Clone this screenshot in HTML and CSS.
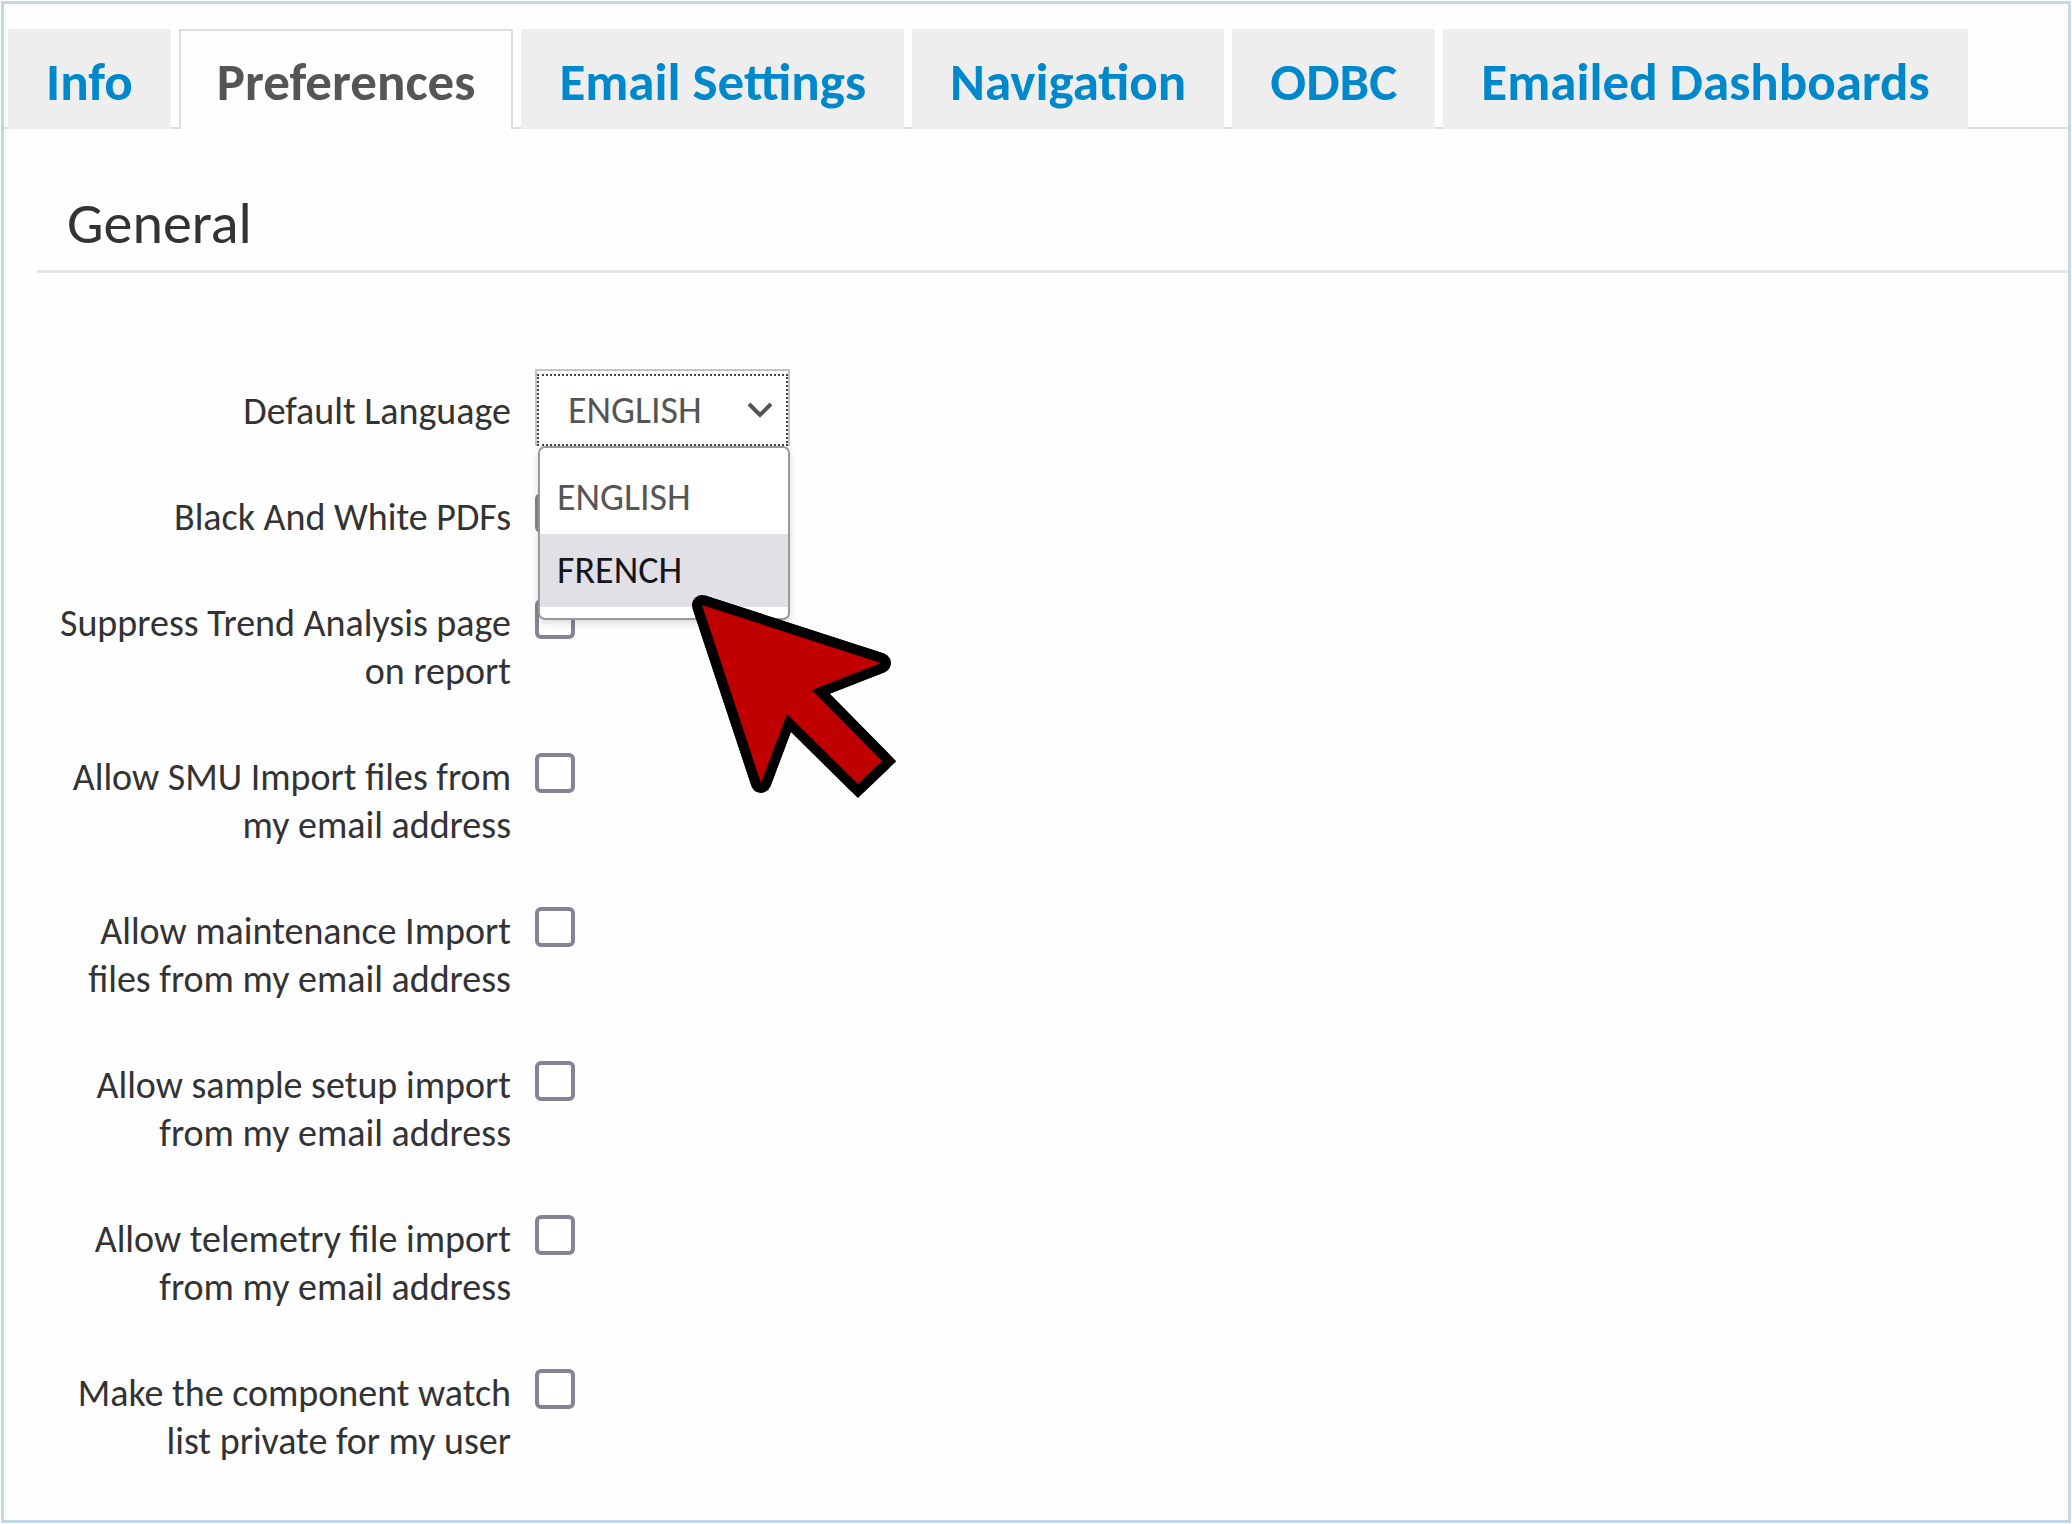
FILE: index.html
```html
<!DOCTYPE html>
<html lang="en">
<head>
  <meta charset="UTF-8">
  <meta name="viewport" content="width=device-width, initial-scale=1.0">
  <title>User Preferences</title>
  <link rel="stylesheet" href="styles.css">
</head>
<body>
  <div class="frame">
    <nav class="tabs">
      <a href="#info">Info</a>
      <a href="#preferences" class="active">Preferences</a>
      <a href="#email">Email Settings</a>
      <a href="#navigation">Navigation</a>
      <a href="#odbc">ODBC</a>
      <a href="#dashboards">Emailed Dashboards</a>
    </nav>

    <main>
      <h2>General</h2>

      <form>
        <div class="row">
          <label for="language">Default Language</label>
          <div class="dropdown">
            <select id="language">
              <option selected>ENGLISH</option>
              <option>FRENCH</option>
            </select>
            <svg class="chevron" viewBox="0 0 28 18" aria-hidden="true">
              <path d="M3 3 L14 14 L25 3"/>
            </svg>
            <ul class="menu">
              <li>ENGLISH</li>
              <li class="hover">FRENCH</li>
            </ul>
            <svg class="cursor" viewBox="0 0 210 212" aria-hidden="true">
              <!-- the round joins soften the three tips, the mitred ones keep the tail square -->
              <path stroke-linejoin="round" d="M12 15 L191 73 L122 100 L192 171 L168 194 L97 124 L71 193 Z"/>
              <path stroke-miterlimit="2" d="M12 15 L191 73 L122 100 L192 171 L168 194 L97 124 L71 193 Z"/>
            </svg>
          </div>
        </div>
        <div class="row">
          <label for="bw">Black And White PDFs</label>
          <input type="checkbox" id="bw">
        </div>
        <div class="row">
          <label for="trend">Suppress Trend Analysis page on report</label>
          <input type="checkbox" id="trend">
        </div>
        <div class="row">
          <label for="smu">Allow SMU Import files from my email address</label>
          <input type="checkbox" id="smu">
        </div>
        <div class="row">
          <label for="maintenance">Allow maintenance Import files from my email address</label>
          <input type="checkbox" id="maintenance">
        </div>
        <div class="row">
          <label for="sample">Allow sample setup import from my email address</label>
          <input type="checkbox" id="sample">
        </div>
        <div class="row">
          <label for="telemetry">Allow telemetry file import from my email address</label>
          <input type="checkbox" id="telemetry">
        </div>
        <div class="row">
          <label for="watch">Make the component watch list private for my user</label>
          <input type="checkbox" id="watch">
        </div>
      </form>
    </main>
  </div>
</body>
</html>
```
FILE: styles.css
```css
:root {
  --frame: #c0d8ea;
  --line: #dddddd;
  --link: #0088cc;
  --text: #333333;
  --muted: #555555;
  --box: #858395;
}
* { box-sizing: border-box; margin: 0; padding: 0; }
body {
  font-family: Carlito, Calibri, Lato, sans-serif;
  font-size: 38px;
  line-height: 48px;
  color: var(--text);
  background: #fff;
  padding: 1px;
}
.frame {
  min-height: calc(100vh - 2px);
  border: 3px solid var(--frame);
  background: #fefefe;
}
.tabs {
  display: flex;
  gap: 8px;
  margin-top: 25px;
  padding-left: 4px;
  background: linear-gradient(var(--line), var(--line)) bottom / 100% 2px no-repeat;
}
.tabs a {
  height: 100px;
  padding: 0 36px;
  border: 2px solid #eee;
  border-bottom: none;
  background: #eee;
  color: var(--link);
  font-size: 53px;
  font-weight: bold;
  line-height: 102px;
  text-decoration: none;
  white-space: nowrap;
}
.tabs a.active {
  background: #fefefe;
  border-color: var(--line);
  color: var(--muted);
}
main {
  padding-left: 33px;
}
h2 {
  padding: 63px 30px 14px;
  border-bottom: 3px solid #e5e5e5;
  font-size: 58px;
  font-weight: normal;
  line-height: 64px;
}
form {
  padding: 114px 0 40px;
}
.row {
  display: flex;
  align-items: flex-start;
  gap: 24px;
  margin-bottom: 58px;
}
.row:last-child { margin-bottom: 0; }
.row label {
  width: 474px;
  text-align: right;
}
input[type=checkbox] {
  appearance: none;
  width: 40px;
  height: 40px;
  border: 4px solid var(--box);
  border-radius: 6px;
  background: #fff;
}
.dropdown {
  position: relative;
  width: 255px;
  height: 77px;
  margin: -18px 0 -11px;
  padding: 3px 0 0;
  border: 2px solid #c4c4c4;
}
.dropdown select {
  appearance: none;
  display: block;
  width: 100%;
  height: 72px;
  padding-left: 29px;
  border: 2px dotted #444;
  background: #fff;
  color: var(--muted);
  font: inherit;
}
.chevron {
  position: absolute;
  top: 30px;
  right: 14px;
  width: 28px;
  height: 18px;
  fill: none;
  stroke: var(--muted);
  stroke-width: 4;
}
.menu {
  position: absolute;
  z-index: 1;
  top: 75px;
  left: 1px;
  right: -2px;
  padding: 13px 0 11px;
  border: 2px solid #999;
  border-radius: 7px;
  background: #fff;
  box-shadow: 0 3px 8px rgba(0, 0, 0, 0.15);
  color: var(--muted);
  list-style: none;
}
.menu li {
  padding-left: 17px;
  line-height: 73px;
}
.menu li.hover {
  background: #e0e0e6;
  color: #15141a;
}
.cursor {
  position: absolute;
  z-index: 2;
  top: 219px;
  left: 153px;
  width: 210px;
  height: 212px;
  fill: #c00000;
  stroke: #000;
  stroke-width: 20;
  paint-order: stroke;
}
```
